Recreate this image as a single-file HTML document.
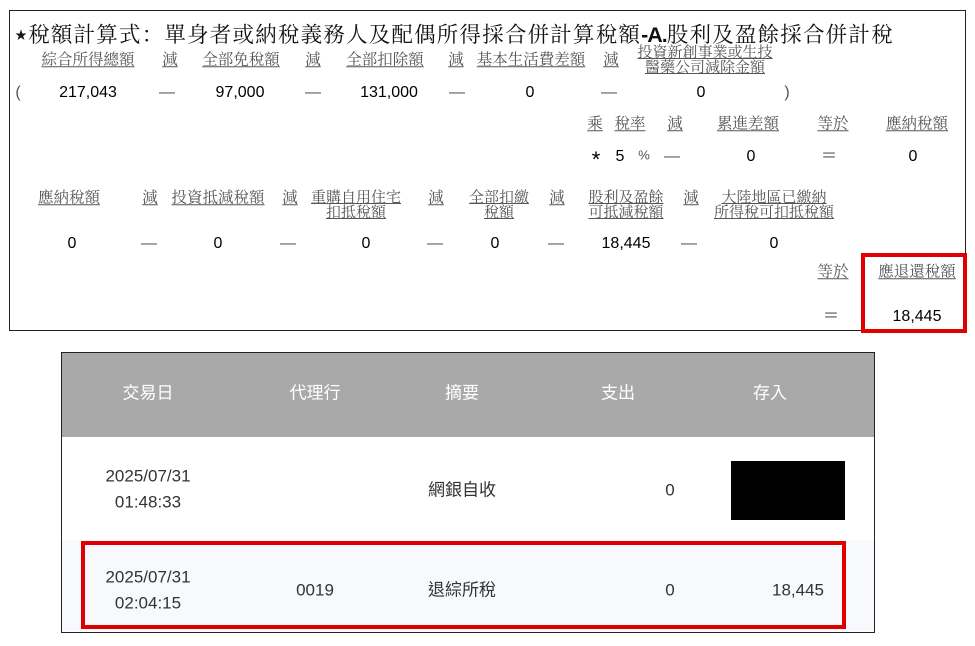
<!DOCTYPE html>
<html><head><meta charset="utf-8"><style>
body{margin:0;width:975px;height:646px;background:#fff;position:relative;overflow:hidden;font-family:"Liberation Sans","Noto Sans CJK TC",sans-serif;}
.a{position:absolute;white-space:nowrap;transform:translate(-50%,-50%);line-height:1;}
.l{font-family:"Liberation Serif","Noto Serif CJK SC",serif;font-size:15.5px;color:#555;text-decoration:underline;text-underline-offset:2px;}
.l2{font-family:"Liberation Serif","Noto Serif CJK SC",serif;font-size:15px;color:#555;text-decoration:underline;line-height:15px;text-align:center;}
.n{font-size:16px;color:#000;}
.g{font-size:16px;color:#555;}
.t{font-family:"Liberation Sans","Noto Sans CJK TC",sans-serif;font-size:17px;color:#333;}
.h{font-family:"Liberation Sans","Noto Sans CJK TC",sans-serif;font-size:17px;color:#fff;}
</style></head><body>
<div style="position:absolute;left:9px;top:10px;width:955px;height:319px;border:1px solid #222;"></div>
<div style="position:absolute;left:15px;top:18px;font-family:'Liberation Serif','Noto Serif CJK SC',serif;font-size:21.5px;color:#111;white-space:nowrap;letter-spacing:1.2px;"><span style="font-size:12px;vertical-align:3px">★</span>稅額計算式：單身者或納稅義務人及配偶所得採合併計算稅額<span style="font-family:'Liberation Sans',sans-serif;font-weight:bold;letter-spacing:-1px">-A.</span>股利及盈餘採合併計稅</div>

<span class="a l" style="left:88px;top:60px">綜合所得總額</span>
<span class="a l" style="left:170px;top:60px">減</span>
<span class="a l" style="left:241px;top:60px">全部免稅額</span>
<span class="a l" style="left:313px;top:60px">減</span>
<span class="a l" style="left:385px;top:60px">全部扣除額</span>
<span class="a l" style="left:456px;top:60px">減</span>
<span class="a l" style="left:531px;top:60px">基本生活費差額</span>
<span class="a l" style="left:611px;top:60px">減</span>
<span class="a l2" style="left:705px;top:61px">投資新創事業或生技<br>醫藥公司減除金額</span>

<span class="a g" style="left:18px;top:93px">(</span>
<span class="a n" style="left:88px;top:93px">217,043</span>
<span class="a g" style="left:167px;top:93px">—</span>
<span class="a n" style="left:240px;top:93px">97,000</span>
<span class="a g" style="left:313px;top:93px">—</span>
<span class="a n" style="left:389px;top:93px">131,000</span>
<span class="a g" style="left:457px;top:93px">—</span>
<span class="a n" style="left:530px;top:93px">0</span>
<span class="a g" style="left:609px;top:93px">—</span>
<span class="a n" style="left:701px;top:93px">0</span>
<span class="a g" style="left:787px;top:93px">)</span>

<span class="a l" style="left:595px;top:124px">乘</span>
<span class="a l" style="left:630px;top:124px">稅率</span>
<span class="a l" style="left:675px;top:124px">減</span>
<span class="a l" style="left:748px;top:124px">累進差額</span>
<span class="a l" style="left:833px;top:124px">等於</span>
<span class="a l" style="left:917px;top:124px">應納稅額</span>

<span class="a n" style="left:596px;top:160px;font-size:22px">*</span>
<span class="a n" style="left:620px;top:157px">5</span>
<span class="a g" style="left:644px;top:155px;font-size:13px">%</span>
<span class="a g" style="left:672px;top:157px">—</span>
<span class="a n" style="left:751px;top:157px">0</span>
<span class="a g" style="left:829px;top:157px">＝</span>
<span class="a n" style="left:913px;top:157px">0</span>

<span class="a l" style="left:69px;top:198px">應納稅額</span>
<span class="a l" style="left:150px;top:198px">減</span>
<span class="a l" style="left:218px;top:198px">投資抵減稅額</span>
<span class="a l" style="left:290px;top:198px">減</span>
<span class="a l2" style="left:356px;top:206px">重購自用住宅<br>扣抵稅額</span>
<span class="a l" style="left:436px;top:198px">減</span>
<span class="a l2" style="left:499px;top:206px">全部扣繳<br>稅額</span>
<span class="a l" style="left:557px;top:198px">減</span>
<span class="a l2" style="left:626px;top:206px">股利及盈餘<br>可抵減稅額</span>
<span class="a l" style="left:691px;top:198px">減</span>
<span class="a l2" style="left:774px;top:206px">大陸地區已繳納<br>所得稅可扣抵稅額</span>

<span class="a n" style="left:72px;top:244px">0</span>
<span class="a g" style="left:149px;top:244px">—</span>
<span class="a n" style="left:218px;top:244px">0</span>
<span class="a g" style="left:288px;top:244px">—</span>
<span class="a n" style="left:366px;top:244px">0</span>
<span class="a g" style="left:435px;top:244px">—</span>
<span class="a n" style="left:495px;top:244px">0</span>
<span class="a g" style="left:556px;top:244px">—</span>
<span class="a n" style="left:626px;top:244px">18,445</span>
<span class="a g" style="left:689px;top:244px">—</span>
<span class="a n" style="left:774px;top:244px">0</span>

<span class="a l" style="left:833px;top:272px">等於</span>
<span class="a l" style="left:917px;top:272px">應退還稅額</span>
<span class="a g" style="left:831px;top:317px">＝</span>
<span class="a n" style="left:917px;top:317px">18,445</span>
<div style="position:absolute;left:861px;top:253px;width:98px;height:72px;border:4px solid #e00000;"></div>

<div style="position:absolute;left:61px;top:352px;width:812px;height:279px;border:1px solid #222;"></div>
<div style="position:absolute;left:62px;top:353px;width:812px;height:84px;background:#a9a9a9;"></div>
<div style="position:absolute;left:62px;top:540px;width:812px;height:91px;background:#f7f9fc;"></div>
<span class="a h" style="left:148px;top:393px">交易日</span>
<span class="a h" style="left:315px;top:393px">代理行</span>
<span class="a h" style="left:462px;top:393px">摘要</span>
<span class="a h" style="left:618px;top:393px">支出</span>
<span class="a h" style="left:770px;top:393px">存入</span>

<span class="a t" style="left:148px;top:476px">2025/07/31</span>
<span class="a t" style="left:148px;top:502px">01:48:33</span>
<span class="a t" style="left:462px;top:490px">網銀自收</span>
<span class="a t" style="left:670px;top:490px">0</span>
<div style="position:absolute;left:731px;top:461px;width:114px;height:59px;background:#000;"></div>

<span class="a t" style="left:148px;top:577px">2025/07/31</span>
<span class="a t" style="left:148px;top:603px">02:04:15</span>
<span class="a t" style="left:315px;top:590px">0019</span>
<span class="a t" style="left:462px;top:590px">退綜所稅</span>
<span class="a t" style="left:670px;top:590px">0</span>
<span class="a t" style="left:798px;top:590px">18,445</span>
<div style="position:absolute;left:81px;top:541px;width:757px;height:80px;border:4px solid #e00000;"></div>
</body></html>
